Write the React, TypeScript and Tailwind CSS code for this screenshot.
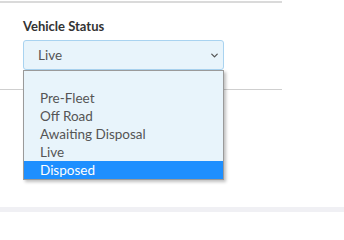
import { ChevronDown } from "lucide-react";

const options = ["", "Pre-Fleet", "Off Road", "Awaiting Disposal", "Live", "Disposed"];

export default function App() {
  const selected = "Disposed";

  return (
    <div
      className="w-[344px] h-[212px] bg-white flex flex-col overflow-hidden"
      style={{ fontFamily: "Lato, 'Noto Sans', sans-serif" }}
    >
      {/* top rule */}
      <div className="w-[282px] h-[2px] mt-[1px] bg-[#dadada]" />

      {/* field */}
      <div className="pl-[23px] pt-[14px] w-[282px]">
        <label className="block text-[13px] leading-[18px] font-bold text-[#333]">
          Vehicle Status
        </label>
        <div className="relative mt-[5px] w-[201px]">
          <div className="h-[30px] rounded-[3px] border border-[#a9d3f0] bg-[#e8f4fb] flex items-center justify-between pl-[14px] pr-[3px] text-[13.5px] text-[#555]">
            <span className="pt-[1px]">Live</span>
            <ChevronDown className="w-[11px] h-[11px] text-[#555]" strokeWidth={2.8} />
          </div>

          {/* open list */}
          <ul className="absolute left-0 top-[30px] z-10 w-[201px] bg-[#e8f4fb] border border-[#9a9a9a] shadow-[2px_2px_3px_rgba(0,0,0,0.25)] text-[13.5px] text-[#555]">
            {options.map((o, i) => (
              <li
                key={i}
                className={
                  o === selected
                    ? "h-[18px] leading-[18px] pl-[16px] bg-[#1e8fff] text-white"
                    : "h-[18px] leading-[18px] pl-[16px]"
                }
              >
                {o}
              </li>
            ))}
          </ul>
        </div>
      </div>

      {/* rule behind the list */}
      <div className="w-[282px] h-[1px] mt-[19px] bg-[#cfcfcf]" />

      <div className="flex-1" />
      <div className="h-[5px] bg-[#f0f0f4]" />
    </div>
  );
}
